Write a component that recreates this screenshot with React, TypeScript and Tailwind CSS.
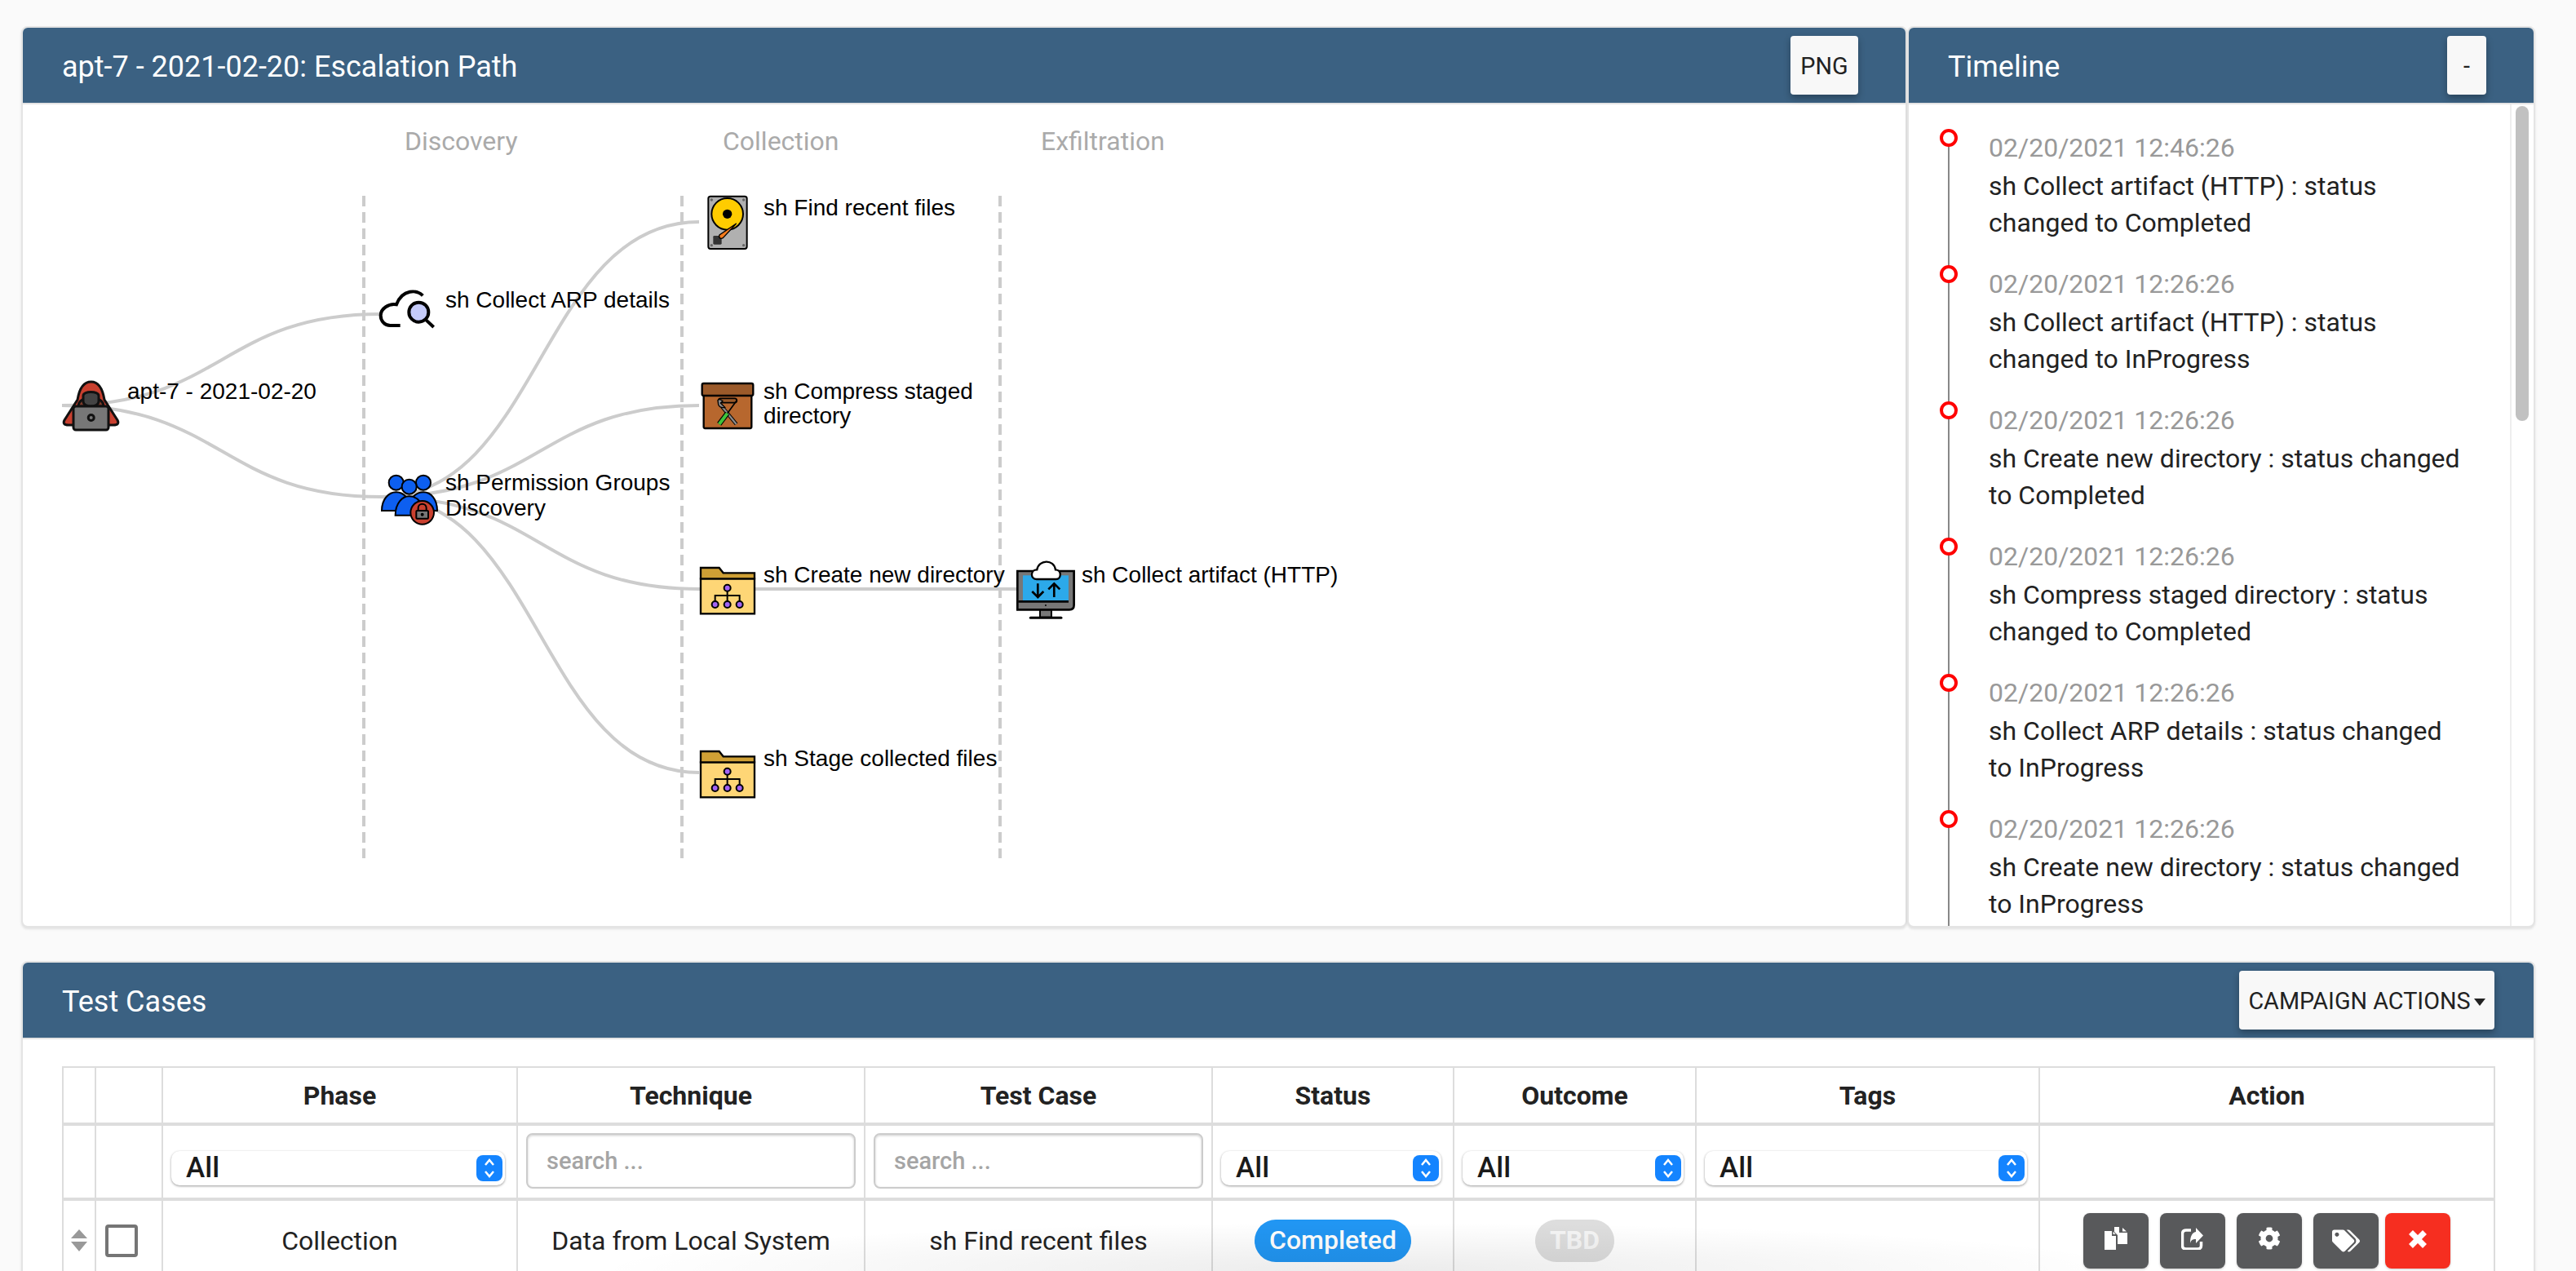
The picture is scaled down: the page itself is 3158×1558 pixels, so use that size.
import React from "react";
import { FaCog, FaTags } from "react-icons/fa";

const S = "[font-family:Roboto,sans-serif]";

function Folder({ dy = 0 }: { dy?: number }) {
  return (
    <g transform={`translate(840 ${670 + dy}) scale(0.3333)`} stroke="#000" strokeWidth="7">
      <rect x="57" y="118" width="198" height="129" fill="#fed676" />
      <path d="M57 118V78H125L140 97H255V118Z" fill="#cfa035" />
      <path d="M155 164V180M110 201V180H200V201M155 180V201" fill="none" strokeWidth="6" />
      {[[155, 152], [110, 213], [155, 213], [200, 213]].map(([x, y], i) => (
        <circle key={i} cx={x} cy={y} r="12" fill="#a364f5" strokeWidth="6" />
      ))}
    </g>
  );
}

function Graph() {
  const edges = [
    "M76 497C272 497 272 385 467 385",
    "M76 497C272 497 272 609 467 609",
    "M467 609C662 609 662 272 857 272",
    "M467 609C662 609 662 497 857 497",
    "M467 609C662 609 662 722 857 722",
    "M467 609C662 609 662 947 857 947",
    "M857 722H1247",
  ];
  const lab = "Liberation Sans, Arial, sans-serif";
  return (
    <svg width="2308" height="1007" viewBox="28 128 2308 1007" className="block">
      <g fontFamily="Roboto, sans-serif" fontSize="32" fill="#aaaaaa">
        <text x="496" y="184">Discovery</text>
        <text x="886" y="184">Collection</text>
        <text x="1276" y="184">Exfiltration</text>
      </g>
      {[446, 836, 1226].map((x) => (
        <line key={x} x1={x} x2={x} y1="240" y2="1052" stroke="#cccccc" strokeWidth="4" strokeDasharray="13 7" />
      ))}
      {edges.map((d) => (
        <path key={d} d={d} fill="none" stroke="#cccccc" strokeWidth="4" />
      ))}

      {/* hacker */}
      <g stroke="#111" strokeWidth="3">
        <path d="M111.7 468C101 468 97 478 95 490L79 515Q76 521 84 521H139Q147 521 144 515L128 490C126 478 122 468 111.7 468Z" fill="#c9402f" />
        <path d="M96 498C96 484 127 484 127 498Z" fill="#7e3b2b" />
        <path d="M102 485C102 479 121 479 121 485V492C121 500 102 500 102 492Z" fill="#444" />
        <rect x="90" y="498" width="43" height="29" rx="3" fill="#777" />
        <circle cx="111.7" cy="512" r="3.5" fill="#777" />
      </g>

      {/* cloud search */}
      <g transform="translate(450 330) scale(0.3333)" stroke="#000" strokeWidth="12" fill="none">
        <path d="M205 97C185 75 130 72 108 130C80 125 50 145 50 170C50 190 65 207 85 207H122" />
        <circle cx="190" cy="158" r="36" fill="#c5cbfa" />
        <path d="M215 185L245 213" />
      </g>

      {/* permission groups */}
      <g transform="translate(450 330) scale(0.3333)" stroke="#000" strokeWidth="6" fill="#0d5ff0">
        <path d="M54 888C54 845 80 820 107 820C135 820 160 845 160 888Z" />
        <path d="M150 888C150 845 180 820 207 820C235 820 258 845 258 888Z" />
        <circle cx="107" cy="785" r="27" />
        <circle cx="207" cy="785" r="27" />
        <path d="M104 905C104 860 130 835 155 835C185 835 208 860 208 905Z" />
        <circle cx="155" cy="800" r="27" />
        <circle cx="203" cy="895" r="43" fill="#c9402f" />
        <path d="M188 888V878C188 858 218 858 218 878V888" fill="none" />
        <rect x="181" y="888" width="44" height="29" rx="3" fill="#777" />
        <circle cx="203" cy="902" r="3" fill="#111" />
      </g>

      {/* hard drive */}
      <g transform="translate(840 220) scale(0.3333)" stroke="#000" strokeWidth="6">
        <rect x="85" y="62" width="142" height="193" rx="8" fill="#b0b0b0" />
        {[[97, 75], [215, 75], [97, 242], [215, 242]].map(([x, y], i) => (
          <circle key={i} cx={x} cy={y} r="5" fill="#666" stroke="none" />
        ))}
        <circle cx="155" cy="127" r="58" fill="#ffcc00" />
        <circle cx="155" cy="127" r="17" fill="#000" stroke="none" />
        <rect x="103" y="207" width="31" height="32" rx="4" fill="#333" stroke="none" />
        <path d="M188 162L126 204Q122 212 130 217Q138 218 142 212Z" fill="#f47a1c" strokeWidth="4" />
      </g>

      {/* box */}
      <g transform="translate(840 220) scale(0.3333)" stroke="#000" strokeWidth="7">
        <rect x="68" y="790" width="176" height="125" rx="5" fill="#b7672e" />
        <rect x="62" y="750" width="188" height="45" rx="6" fill="#9b5a2a" />
        <rect x="122" y="805" width="68" height="16" rx="8" fill="#9b5a2a" strokeWidth="5" />
        <path d="M135 835L188 900" stroke="#000" strokeWidth="13" />
        <path d="M135 835L188 900" stroke="#8a8a8a" strokeWidth="7" />
        <path d="M120 812L122 828Q128 842 146 838L130 822L138 815Q126 805 120 812Z" fill="#8a8a8a" strokeWidth="4" />
        <path d="M190 812L155 860" strokeWidth="5" />
        <path d="M155 860L125 900" stroke="#000" strokeWidth="19" />
        <path d="M155 860L125 900" stroke="#3fc43c" strokeWidth="12" />
      </g>

      <Folder />
      <Folder dy={225} />

      {/* monitor */}
      <g transform="translate(840 670) scale(0.3333)" stroke="#000">
        <rect x="1305" y="232" width="42" height="28" fill="#777" strokeWidth="6" />
        <path d="M1270 262H1383" strokeWidth="9" strokeLinecap="round" />
        <path d="M1222 90H1430V215Q1430 232 1413 232H1222Z" fill="#777" strokeWidth="8" />
        <rect x="1242" y="106" width="168" height="93" fill="#2ca9ea" stroke="none" />
        <path d="M1225 202H1410" strokeWidth="8" />
        <circle cx="1326" cy="216" r="3" fill="#000" stroke="none" />
        <path d="M1292 120C1268 118 1270 85 1294 85C1300 48 1356 44 1362 85C1386 86 1384 120 1364 120Z" fill="#fff" strokeWidth="7" />
        <path d="M1297 136V186M1276 165L1297 186L1318 165M1357 186V136M1336 157L1357 136L1378 157" fill="none" strokeWidth="8" />
      </g>

      <g fontFamily={lab} fontSize="28" fill="#000">
        <text x="156" y="489">apt-7 - 2021-02-20</text>
        <text x="546" y="377">sh Collect ARP details</text>
        <text x="546" y="601">sh Permission Groups</text>
        <text x="546" y="632">Discovery</text>
        <text x="936" y="264">sh Find recent files</text>
        <text x="936" y="489">sh Compress staged</text>
        <text x="936" y="519">directory</text>
        <text x="936" y="714">sh Create new directory</text>
        <text x="936" y="939">sh Stage collected files</text>
        <text x="1326" y="714">sh Collect artifact (HTTP)</text>
      </g>
    </svg>
  );
}

const events = [
  ["02/20/2021 12:46:26", "sh Collect artifact (HTTP) : status changed to Completed"],
  ["02/20/2021 12:26:26", "sh Collect artifact (HTTP) : status changed to InProgress"],
  ["02/20/2021 12:26:26", "sh Create new directory : status changed to Completed"],
  ["02/20/2021 12:26:26", "sh Compress staged directory : status changed to Completed"],
  ["02/20/2021 12:26:26", "sh Collect ARP details : status changed to InProgress"],
  ["02/20/2021 12:26:26", "sh Create new directory : status changed to InProgress"],
];

function HeadButton({ children, className = "" }: { children: React.ReactNode; className?: string }) {
  return (
    <button className={`h-[72px] rounded-[4px] bg-[#f8f8f8] pt-[3px] text-[28.8px] text-[#222] shadow-[0_4px_8px_rgba(0,0,0,0.3)] ${className}`}>
      {children}
    </button>
  );
}

function Select() {
  return (
    <div className="relative mt-[16px] mr-[4px] h-[42px]">
      <select className="h-full w-full appearance-none rounded-[10px] bg-white pl-[18px] text-[35px] leading-[42px] font-medium text-[#1a1a1a] shadow-[0_1px_3px_rgba(0,0,0,0.4)] outline-none">
        <option>All</option>
      </select>
      <div className="pointer-events-none absolute top-[5px] right-[3px] flex h-[32px] w-[32px] items-center justify-center rounded-[8px] bg-[#1484ff]">
        <svg width="16" height="26" viewBox="0 0 16 26" fill="none" stroke="#fff" strokeWidth="2.5">
          <path d="M3 9L8 3L13 9M3 17L8 23L13 17" />
        </svg>
      </div>
    </div>
  );
}

function Search() {
  return (
    <input
      placeholder="search ..."
      className="mb-[2px] h-[68px] w-full rounded-[8px] border-2 border-[#ccc] bg-white pl-[23px] text-[29px] font-medium shadow-[inset_0_1px_3px_rgba(0,0,0,0.2)] outline-none placeholder:text-[#a5a5a5]"
    />
  );
}

function CopyIcon() {
  return (
    <svg width="28" height="28" viewBox="0 0 28 28" fill="#fff">
      <path d="M0 5H9V11H14V28H0Z" />
      <path d="M10.5 5.5L13.5 9H10.5Z" />
      <path d="M12 0H18V7H28V21H16V10L12 6Z" />
      <path d="M22 1L27 5.5H22Z" />
    </svg>
  );
}

function ShareIcon() {
  return (
    <svg width="28" height="28" viewBox="0 0 28 28" fill="#fff">
      <path d="M12 4H6Q1.5 4 1.5 8.5V23Q1.5 27 6 27H20Q24.5 27 24.5 23V18" fill="none" stroke="#fff" strokeWidth="3.5" />
      <path d="M18 1L27 10.5L18 20V15C14 15 12 16 11 20C11 12 13 7 18 6Z" />
    </svg>
  );
}

function CrossIcon() {
  return (
    <svg width="24" height="24" viewBox="0 0 24 24" className="mt-[3px]" fill="none" stroke="#fff" strokeWidth="7">
      <path d="M3.5 3.5L20.5 20.5M20.5 3.5L3.5 20.5" />
    </svg>
  );
}

function ActionBtn({ red, children }: { red?: boolean; children: React.ReactNode }) {
  return (
    <button
      className={`flex h-[68px] w-[80px] items-start justify-center rounded-[8px] pt-[17px] text-white shadow-[0_1px_3px_rgba(0,0,0,0.2)] ${
        red ? "bg-[#f62e20]" : "bg-[#58595b]"
      }`}
    >
      {children}
    </button>
  );
}

const th = "border-2 border-[#dddddd] border-b-4 p-0 text-center text-[32px] font-bold text-[#222]";
const fc = "border-2 border-[#dddddd] border-b-4 px-[10px] py-0 align-middle";
const td = "border-2 border-[#dddddd] p-0 text-center text-[32px] text-[#222]";
const panel = "flex flex-col overflow-hidden rounded-[8px] border-2 border-[#e4e4e4] bg-white shadow-[0_2px_3px_rgba(0,0,0,0.1)]";
const head = "flex shrink-0 items-center justify-between border-b-2 border-[#e4e4e4] bg-[#3b6182] pl-[48px] text-[36px] text-white";

export default function App() {
  return (
    <div className={`relative h-[1558px] overflow-hidden bg-[#fafafa] pt-[32px] pr-[50px] pl-[26px] ${S}`}>
      <div className="flex h-[1105px]">
        <section className={`w-[2312px] ${panel}`}>
          <header className={`h-[94px] pr-[58px] ${head}`}>
            <span className="pt-[3px]">apt-7 - 2021-02-20: Escalation Path</span>
            <HeadButton className="w-[83px]">PNG</HeadButton>
          </header>
          <Graph />
        </section>

        <section className={`w-[770px] ${panel}`}>
          <header className={`h-[94px] pr-[58px] ${head}`}>
            <span className="pt-[3px]">Timeline</span>
            <HeadButton className="w-[48px]">-</HeadButton>
          </header>
          <div className="flex min-h-0 flex-1">
            <div className="min-w-0 flex-1 overflow-hidden pt-[31px]">
              {events.map(([t, m], i) => (
                <div key={i} className="relative h-[167px] pl-[98px] text-[32px] leading-[45px]">
                  <span className="absolute top-[-1px] left-[38px] z-10 h-[22px] w-[22px] rounded-full border-4 border-[#ff0000] bg-white" />
                  <span className="absolute top-0 bottom-0 left-[48px] w-[2px] bg-[#888888]" />
                  <div className="text-[#999999]">{t}</div>
                  <div className="mt-[2px] w-[590px] text-[#222]">{m}</div>
                </div>
              ))}
            </div>
            <div className="w-[29px] shrink-0 border-l-2 border-[#eeeeee] pt-[2px] pl-[5px]">
              <div className="h-[386px] w-[16px] rounded-full bg-[#c1c1c1]" />
            </div>
          </div>
        </section>
      </div>

      <section className={`mt-[41px] w-[3082px] ${panel}`}>
        <header className={`h-[94px] pr-[48px] ${head}`}>
          <span className="pt-[3px]">Test Cases</span>
          <HeadButton className="flex w-[313px] items-center justify-center gap-[4px] text-[#222]">
            CAMPAIGN ACTIONS
            <span className="mt-[2px] h-0 w-0 border-x-[7px] border-t-[9px] border-x-transparent border-t-[#222]" />
          </HeadButton>
        </header>
        <div className="pt-[33px] pr-[49px] pl-[48px]">
          <table className="w-[2981px] table-fixed border-collapse">
            <colgroup>
              {[40, 82, 435, 426, 426, 296, 297, 421, 558].map((w, i) => (
                <col key={i} style={{ width: w }} />
              ))}
            </colgroup>
            <thead>
              <tr className="h-[70px]">
                <th className={th} />
                <th className={th} />
                <th className={th}>Phase</th>
                <th className={th}>Technique</th>
                <th className={th}>Test Case</th>
                <th className={th}>Status</th>
                <th className={th}>Outcome</th>
                <th className={th}>Tags</th>
                <th className={th}>Action</th>
              </tr>
              <tr className="h-[92px]">
                <td className={fc} />
                <td className={fc} />
                <td className={fc}><Select /></td>
                <td className={fc}><Search /></td>
                <td className={fc}><Search /></td>
                <td className={fc}><Select /></td>
                <td className={fc}><Select /></td>
                <td className={fc}><Select /></td>
                <td className={fc} />
              </tr>
            </thead>
            <tbody>
              <tr className="h-[100px]">
                <td className={td}>
                  <svg width="20" height="27" viewBox="0 0 20 27" fill="#999" className="mx-auto">
                    <path d="M10 0L20 11H0ZM0 15H20L10 27Z" />
                  </svg>
                </td>
                <td className={td}>
                  <div className="ml-[11px] h-[40px] w-[40px] rounded-[4px] border-4 border-[#757575]" />
                </td>
                <td className={td}>Collection</td>
                <td className={td}>Data from Local System</td>
                <td className={td}>sh Find recent files</td>
                <td className={td}>
                  <span className="inline-block h-[52px] w-[192px] rounded-full bg-[#2196f3] text-[32px] leading-[50px] font-medium text-white">Completed</span>
                </td>
                <td className={td}>
                  <span className="inline-block h-[52px] w-[97px] rounded-full bg-[#dddddd] text-[32px] leading-[50px] font-bold text-[#f5f5f5]">TBD</span>
                </td>
                <td className={td} />
                <td className={td}>
                  <div className="flex items-center justify-center">
                    <ActionBtn><CopyIcon /></ActionBtn>
                    <span className="w-[14px]" />
                    <ActionBtn><ShareIcon /></ActionBtn>
                    <span className="w-[14px]" />
                    <ActionBtn><FaCog size={28} /></ActionBtn>
                    <span className="w-[14px]" />
                    <ActionBtn><FaTags size={34} /></ActionBtn>
                    <span className="w-[8px]" />
                    <ActionBtn red><CrossIcon /></ActionBtn>
                  </div>
                </td>
              </tr>
            </tbody>
          </table>
        </div>
      </section>

      <div className="pointer-events-none absolute right-0 bottom-0 left-0 h-[60px] bg-[radial-gradient(ellipse_950px_60px_at_1680px_100%,rgba(0,0,0,0.08),transparent)]" />
    </div>
  );
}
